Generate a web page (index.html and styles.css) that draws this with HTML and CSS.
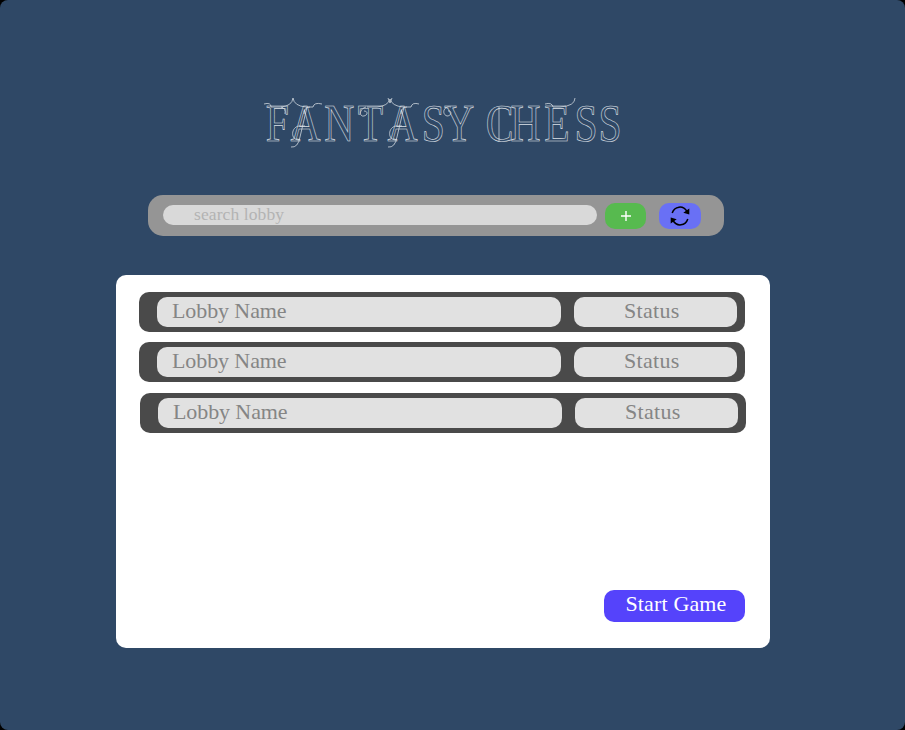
FILE: index.html
```html
<!DOCTYPE html>
<html lang="en">
<head>
<meta charset="utf-8">
<title>Fantasy Chess</title>
<link rel="stylesheet" href="styles.css">
</head>
<body>
<main class="screen">
  <h1 class="title">
    <svg width="370" height="70" viewBox="0 0 370 70">
      <text class="letters" transform="scale(.8 1)" y="51" x="11 42 84 126 163 206 234 270 286 317 359 397 427">FANTASY CHESS</text>
      <g class="swash">
        <path d="M7 14q7-2 7 3h10q11-1 12-9 1 8 13 9h7q1-5 9-3"/>
        <path d="M53 17q-6 0-6 7M24 17q5 1 4 7"/>
        <path d="M110 17h10q11-1 13-8 2 7 13 8h8q1-5 8-3"/>
        <path d="M131 8l2 5 2-5M150 17q-6 0-6 7"/>
        <path d="M48 36h-6c-8 1-9 14 0 14M34 57q7 1 9-10l7-30"/>
        <path d="M145 36h-6c-8 1-9 14 0 14M131 57q7 1 9-10l7-30"/>
        <path d="M109 17c-7 2-7 10-2 9 4-1 4-5 0-5"/>
        <path d="M194 17c-7-2-10 7-4 9 5 0 5-6 1-5"/>
        <path d="M242 17v34M288 14q7-2 8 3h7q15-1 15-9"/>
      </g>
    </svg>
  </h1>
  <div class="toolbar">
    <input class="search" type="text" placeholder="search lobby">
    <button class="tool add" aria-label="Create lobby">
      <svg width="10" height="10" viewBox="0 0 10 10"><path d="M5 0v10M0 5h10" stroke="#fff" stroke-width="1.4"/></svg>
    </button>
    <button class="tool refresh" aria-label="Refresh">
      <svg width="20" height="20" viewBox="0 0 20 20">
        <path d="M2.200 7C4.500.2 13-1.200 17 5.500M17.800 13C15.500 19.800 7 21.200 3 14.500" fill="none" stroke="#000" stroke-width="1.5"/>
        <path d="M19.300 2.500v6l-6-1.700zM.7 17.500v-6l6 1.700z"/>
      </svg>
    </button>
  </div>
  <section class="panel">
    <div class="row"><div class="name">Lobby Name</div><div class="status">Status</div></div>
    <div class="row"><div class="name">Lobby Name</div><div class="status">Status</div></div>
    <div class="row shifted"><div class="name">Lobby Name</div><div class="status">Status</div></div>
    <button class="start">Start Game</button>
  </section>
</main>
</body>
</html>
```
FILE: styles.css
```css
* { box-sizing: border-box; }
body { margin: 0; background: #000; font-family: "Liberation Serif", serif; }
button, input { border: 0; padding: 0; font-family: inherit; }
svg { display: block; }
.screen {
  width: 905px;
  height: 730px;
  padding-top: 90px;
  background: #2f4866;
  border-radius: 8px;
}
.title { margin: 0 0 35px 257px; height: 70px; font-weight: 400; opacity: .95; }
.letters { font-size: 52px; fill: none; stroke: #e4e9ee; stroke-width: .65px; }
.swash { fill: none; stroke: #e4e9ee; stroke-width: .75px; }
.toolbar {
  display: flex;
  align-items: center;
  width: 576px;
  height: 41px;
  margin-left: 148px;
  padding: 0 23px 1px 15px;
  background: #959595;
  border-radius: 15px;
}
.search {
  width: 434px;
  height: 20px;
  padding: 0 0 1px 31px;
  border-radius: 10px;
  background: #d9d9d9;
  color: #555;
  font-size: 17.500px;
  letter-spacing: .1px;
}
.search::placeholder { color: #b3b3b3; opacity: 1; }
.tool {
  display: flex;
  align-items: center;
  justify-content: center;
  width: 42px;
  height: 26px;
  margin-top: 2px;
  border-radius: 10px;
}
.add { width: 41px; margin-left: 8px; background: #57ba4f; }
.refresh { margin-left: 13px; background: #6970f5; }
.panel {
  display: flex;
  flex-direction: column;
  width: 654px;
  height: 373px;
  margin: 39px 0 0 116px;
  padding: 17px 25px 26px 23px;
  background: #fff;
  border-radius: 10px;
}
.row {
  display: flex;
  gap: 13px;
  width: 606px;
  height: 40px;
  margin-bottom: 10px;
  padding: 5px 8px 5px 18px;
  background: #4a4a4a;
  border-radius: 10px;
}
.shifted { margin: 1px 0 0 1px; }
.name, .status {
  height: 30px;
  border-radius: 10px;
  background: #e1e1e1;
  color: #858585;
  font-size: 22px;
  line-height: 27px;
}
.name { width: 404px; padding-left: 15px; letter-spacing: -.1px; }
.status { width: 163px; padding-left: 50px; letter-spacing: .3px; }
.start {
  width: 141px;
  height: 32px;
  margin-top: auto;
  align-self: flex-end;
  padding: 0 0 4px 3px;
  border-radius: 10px;
  background: #5543fb;
  color: #fff;
  font-size: 22px;
  letter-spacing: .15px;
}
```
